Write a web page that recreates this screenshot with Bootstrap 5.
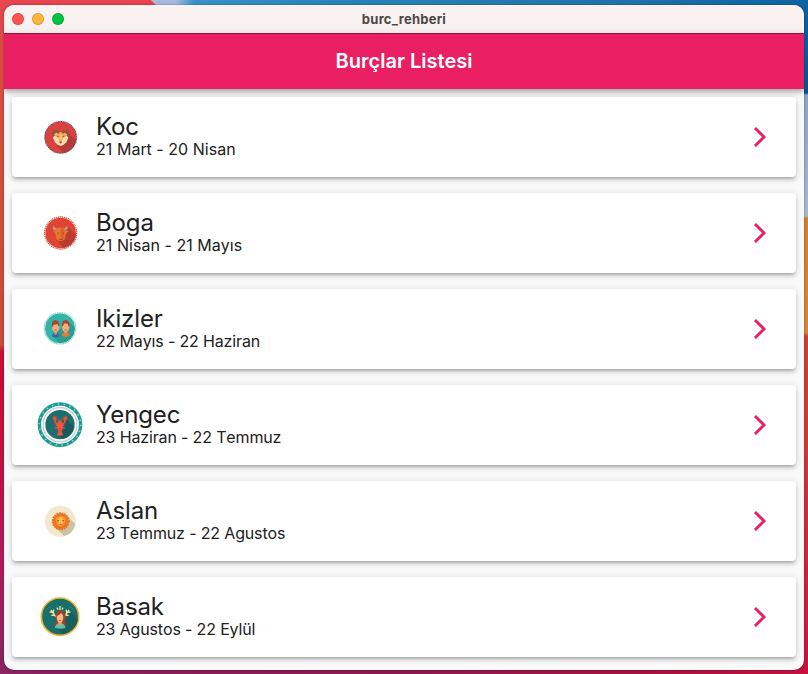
<!DOCTYPE html>
<html lang="tr">
<head>
<meta charset="utf-8">
<meta name="viewport" content="width=device-width, initial-scale=1">
<title>burc_rehberi</title>
<link href="https://cdn.jsdelivr.net/npm/bootstrap@5.3.0/dist/css/bootstrap.min.css" rel="stylesheet">
<style>
  body {
    height: 674px;
    padding: 5px 4px 4px;
    font-family: Inter, "Liberation Sans", sans-serif;
    color: #212121;
    background:
      linear-gradient(#e8474f, #d9503c 140px, #d04a3a 345px, #d00d32 352px, #cc0c3c 430px, #b81a5c 560px, #8d2463 660px) left / 4px 100% no-repeat,
      linear-gradient(#0b65a4, #07568a 93px, #8fa6cf 95px, #a9bdd0 216px, #d08534 218px, #d28b38 333px, #c9443c 336px, #d03a3a 450px, #d4173f 640px, #c5123d) right / 4px 100% no-repeat,
      linear-gradient(45deg, #ec4351 0, #ec4351 5px, #a9bbdf 6px) 148px 0 / 8px 5px no-repeat,
      linear-gradient(90deg, #e8474f, #ec4351 148px, #a9bbdf 149px, #a9bbdf 176px, #3a93c9 194px, #2a86bd 330px, #1f73ad 640px, #0b65a4) top / 100% 16px no-repeat,
      linear-gradient(90deg, #8d2463, #8a1f5c 100px, #8d1a50 400px, #a8133f 650px, #c5123d) bottom / 100% 16px no-repeat,
      #fafafa;
    overflow: hidden;
  }
  .app-window {
    height: 665px;
    border-radius: 10px;
    background: #fafafa;
    box-shadow: 0 0 1px rgba(0,0,0,.65), 0 0 5px rgba(0,0,0,.16);
  }
  .title-strip { height: 29px; background: #faf1f1; border-bottom: 1px solid #98183f; padding: 0 8px; }
  .title-strip .caption { font-size: 13px; font-weight: 700; color: #4c4748; line-height: 28px; letter-spacing: .26px; }
  .dot { width: 12px; height: 12px; border-radius: 50%; border: 1px solid rgba(0,0,0,.14); background-clip: border-box; }
  .dot-close { background: #ff5350; }
  .dot-min { background: #ffb43c; }
  .dot-max { background: #00c440; }
  .app-bar { height: 55px; background: #e91e63; box-shadow: 0 2px 4px -1px rgba(0,0,0,.2), 0 4px 5px rgba(0,0,0,.14), 0 1px 10px rgba(0,0,0,.12); }
  .app-bar h1 { font-size: 20px; font-weight: 600; line-height: 55px; letter-spacing: .02px; }
  .sign-card {
    height: 80px; padding: 0 24px; border: 0; border-radius: 4px; color: inherit;
    box-shadow: 0 3px 3px -2px rgba(0,0,0,.2), 0 3px 4px rgba(0,0,0,.14), 0 1px 8px rgba(0,0,0,.12);
  }
  .sign-list { padding: 8px; gap: 16px; }
  .sign-icon { width: 50px; height: 50px; overflow: visible; }
  .sign-text { padding: 0 0 3px 10px; }
  .sign-name { font-size: 24px; line-height: 28px; letter-spacing: -.12px; }
  .sign-date { font-size: 16px; line-height: 17px; letter-spacing: -.15px; font-kerning: none; }
  .sign-date.spaced { letter-spacing: .04px; }
  .chevron { width: 24px; height: 24px; }
</style>
</head>
<body>
<main class="app-window d-flex flex-column overflow-hidden">
  <header class="title-strip d-flex align-items-center position-relative flex-shrink-0">
    <div class="d-flex gap-2">
      <span class="dot dot-close"></span><span class="dot dot-min"></span><span class="dot dot-max"></span>
    </div>
    <div class="caption position-absolute start-0 end-0 text-center">burc_rehberi</div>
  </header>
  <nav class="app-bar text-center text-white flex-shrink-0 position-relative"><h1 class="m-0">Burçlar Listesi</h1></nav>
  <section class="sign-list d-flex flex-column">

    <a class="card sign-card flex-row align-items-center text-decoration-none" href="#">
      <svg class="sign-icon" viewBox="0 0 150 150">
        <circle cx="74" cy="76" r="47" fill="#d8433f"/>
        <path d="M92 59l29 28a48 48 0 0 1-39 36L62 101z" fill="#b53a38"/>
        <circle cx="74" cy="76" r="48" fill="none" stroke="#7b3550" stroke-width="3"/>
        <circle cx="74" cy="76" r="48.5" fill="none" stroke="#d9c3cc" stroke-width="3" stroke-dasharray="3 5"/>
        <path d="M54 66h40l3 12-6 13-8 7-9 4-9-4-8-7-6-13z" fill="#f5dcb0"/>
        <path d="M60 63q14-6 28 0l3 9-11 5-2 14h-8l-2-14-11-5z" fill="#f6a04f"/>
        <path d="M55 72q-8-9-3-13 9-5 17 4M93 72q8-9 3-13-9-5-17 4" fill="none" stroke="#87593a" stroke-width="6"/>
        <path d="M58 67l5-3M90 67l-5-3" stroke="#e0b57e" stroke-width="4"/>
        <path d="M70 67h8l-1 18h-6z" fill="#fbc47c"/>
        <path d="M63 74h5M80 74h5M71 90h6l-3 4z" stroke="#a0552f" stroke-width="2.5" fill="#8a4930"/>
      </svg>
      <div class="sign-text"><div class="sign-name">Koc</div><div class="sign-date spaced">21 Mart - 20 Nisan</div></div>
      <svg class="chevron ms-auto" viewBox="0 0 24 24"><path d="M7 3l9 9-9 9" fill="none" stroke="#e91e63" stroke-width="2.9"/></svg>
    </a>

    <a class="card sign-card flex-row align-items-center text-decoration-none" href="#">
      <svg class="sign-icon" viewBox="0 0 150 150">
        <circle cx="74" cy="75" r="46" fill="#df4432"/>
        <path d="M98 58l23 24a48 48 0 0 1-38 38L64 99z" fill="#b93c2e"/>
        <circle cx="74" cy="75" r="48" fill="none" stroke="#dd5a49" stroke-width="4" stroke-dasharray="4 2"/>
        <path d="M55 66q-8-4-3-13 2 7 12 8h17q10-1 12-8 5 9-3 13z" fill="#aaa3a0"/>
        <path d="M60 61q13-5 26 0l3 6 9 1-8 9-3 16q-13 12-26 0l-3-16-8-9 8-1z" fill="#e87630"/>
        <path d="M74 59l11 3 1 32q-5 5-12 5z" fill="#d9652b"/>
        <path d="M64 76h4M80 76h4M69 94h10" stroke="#a5432a" stroke-width="3"/>
      </svg>
      <div class="sign-text"><div class="sign-name">Boga</div><div class="sign-date spaced">21 Nisan - 21 Mayıs</div></div>
      <svg class="chevron ms-auto" viewBox="0 0 24 24"><path d="M7 3l9 9-9 9" fill="none" stroke="#e91e63" stroke-width="2.9"/></svg>
    </a>

    <a class="card sign-card flex-row align-items-center text-decoration-none" href="#">
      <svg class="sign-icon" viewBox="0 0 150 150">
        <circle cx="72" cy="73" r="47" fill="#32b5a6"/>
        <path d="M98 53l20 20a46 46 0 0 1-46 46L50 95z" fill="#2a9c90"/>
        <circle cx="72" cy="73" r="46.5" fill="none" stroke="#c9ece7" stroke-width="3"/>
        <circle cx="72" cy="73" r="48" fill="none" stroke="#4fc0b4" stroke-width="2" stroke-dasharray="3 4"/>
        <path d="M47 97q2-11 12-11t12 11q-12 6-24 0z" fill="#2f68b0"/>
        <path d="M77 95q2-10 12-10t12 10q-12 7-24 0z" fill="#e8782d"/>
        <path d="M55 80h8v10l-4 3-4-3zM85 80h8v10l-4 3-4-3z" fill="#dd8c58"/>
        <ellipse cx="59" cy="70" rx="11" ry="15" fill="#f5ad78"/><ellipse cx="89" cy="70" rx="11" ry="15" fill="#f5ad78"/>
        <path d="M47 67q-1-18 11-19 12 0 12 18l-3 1q0-6-5-7-5 3-10 2l-1 7zM77 67q0-18 12-19 13 1 11 19l-3 1-1-8q-6 0-9-3-4 3-6 9z" fill="#a54734"/>
        <path d="M56 78h6M86 78h6" stroke="#c25b3c" stroke-width="3"/>
      </svg>
      <div class="sign-text"><div class="sign-name">Ikizler</div><div class="sign-date">22 Mayıs - 22 Haziran</div></div>
      <svg class="chevron ms-auto" viewBox="0 0 24 24"><path d="M7 3l9 9-9 9" fill="none" stroke="#e91e63" stroke-width="2.9"/></svg>
    </a>

    <a class="card sign-card flex-row align-items-center text-decoration-none" href="#">
      <svg class="sign-icon" viewBox="6 6 150 150">
        <circle cx="78" cy="80" r="62" fill="#fff" stroke="#109da5" stroke-width="10"/>
        <circle cx="78" cy="80" r="62" fill="none" stroke="#e0cd3c" stroke-width="4.5" stroke-dasharray="4.5 13.2"/>
        <circle cx="78" cy="80" r="51" fill="none" stroke="#c3ced6" stroke-width="4"/>
        <circle cx="78" cy="80" r="44" fill="#1d6e6c"/>
        <path d="M92 59l27 27a44 44 0 0 1-32 37L72 109z" fill="#195b5c"/>
        <g fill="none" stroke="#f0503d" stroke-width="4.5"><path d="M73 82l-9-9-1-10M83 82l9-9 1-10M71 88l-8 3M85 88l8 3M72 80l-7 3M84 80l7 3"/><path d="M75 70l-3-9M81 70l3-9" stroke-width="2"/></g>
        <path d="M62 70q-10-7-2-18l3 6 3-5q5 10-1 17zM94 70q10-7 2-18l-3 6-3-5q-5 10 1 17z" fill="#f04c3a"/>
        <path d="M78 66l8 8 1 14-4 14 5 9q-10 3-20 0l5-9-4-14 1-14z" fill="#f4543f"/>
        <path d="M73 92h10M74 99h8" stroke="#d63a34" stroke-width="2"/>
      </svg>
      <div class="sign-text"><div class="sign-name">Yengec</div><div class="sign-date">23 Haziran - 22 Temmuz</div></div>
      <svg class="chevron ms-auto" viewBox="0 0 24 24"><path d="M7 3l9 9-9 9" fill="none" stroke="#e91e63" stroke-width="2.9"/></svg>
    </a>

    <a class="card sign-card flex-row align-items-center text-decoration-none" href="#">
      <svg class="sign-icon" viewBox="0 0 150 150">
        <circle cx="73" cy="76" r="46" fill="#f3e8cc"/>
        <circle cx="73" cy="76" r="46" fill="none" stroke="#f5ebd2" stroke-width="3" stroke-dasharray="3 3"/>
        <path d="M94 61l24 23a46 46 0 0 1-33 36L56 94z" fill="#cbc2a5"/>
        <circle cx="74" cy="76" r="24" fill="#ee7420"/>
        <circle cx="74" cy="76" r="25" fill="none" stroke="#e9691e" stroke-width="4" stroke-dasharray="5 3"/>
        <path d="M74 61q16-2 15 11-1 14-15 20-14-6-15-20-1-13 15-11z" fill="#f9952f"/>
        <path d="M74 63l8 6-3 17-5 5-5-5-3-17z" fill="#fbbd52"/>
        <path d="M64 74h5M79 74h5M71 86h6" stroke="#b24d1b" stroke-width="3"/>
      </svg>
      <div class="sign-text"><div class="sign-name">Aslan</div><div class="sign-date">23 Temmuz - 22 Agustos</div></div>
      <svg class="chevron ms-auto" viewBox="0 0 24 24"><path d="M7 3l9 9-9 9" fill="none" stroke="#e91e63" stroke-width="2.9"/></svg>
    </a>

    <a class="card sign-card flex-row align-items-center text-decoration-none" href="#">
      <svg class="sign-icon" viewBox="0 0 150 150">
        <circle cx="72" cy="74" r="56" fill="#17706c" stroke="#f2b234" stroke-width="5"/>
        <path d="M100 56l26 26a54 54 0 0 1-46 45L54 103z" fill="#195f5d"/>
        <g stroke="#f3e39a" stroke-width="4" fill="none"><path d="M59 74l-14-20M51 61l-10-1M56 69l-10 1M52 62l1-9M85 74l14-20M93 61l10-1M88 69l10 1M92 62l-1-9M72 55V42M66 53l-3-6M78 53l3-6"/></g>
        <path d="M29 55l12-11M115 55l-12-11M64 47v-8M78 47v-8" stroke="#438b78" stroke-width="2"/>
        <path d="M58 96q4-10 1-20-2-21 14-21t16 20q-2 13 0 26H49z" fill="#9e412d"/>
        <path d="M56 107q4-13 16-13 13 0 17 13-16 6-33 0z" fill="#5fc0a4"/>
        <path d="M67 85h10v12l-5 7-5-7z" fill="#e89a67"/>
        <path d="M62 72q8-1 13-9 7 6 7 12-1 16-10 18-10-3-10-21z" fill="#f7bd8a"/>
        <path d="M69 85h6" stroke="#c84436" stroke-width="3"/>
      </svg>
      <div class="sign-text"><div class="sign-name">Basak</div><div class="sign-date">23 Agustos - 22 Eylül</div></div>
      <svg class="chevron ms-auto" viewBox="0 0 24 24"><path d="M7 3l9 9-9 9" fill="none" stroke="#e91e63" stroke-width="2.9"/></svg>
    </a>

  </section>
</main>
<script src="https://cdn.jsdelivr.net/npm/bootstrap@5.3.0/dist/js/bootstrap.bundle.min.js"></script>
</body>
</html>
